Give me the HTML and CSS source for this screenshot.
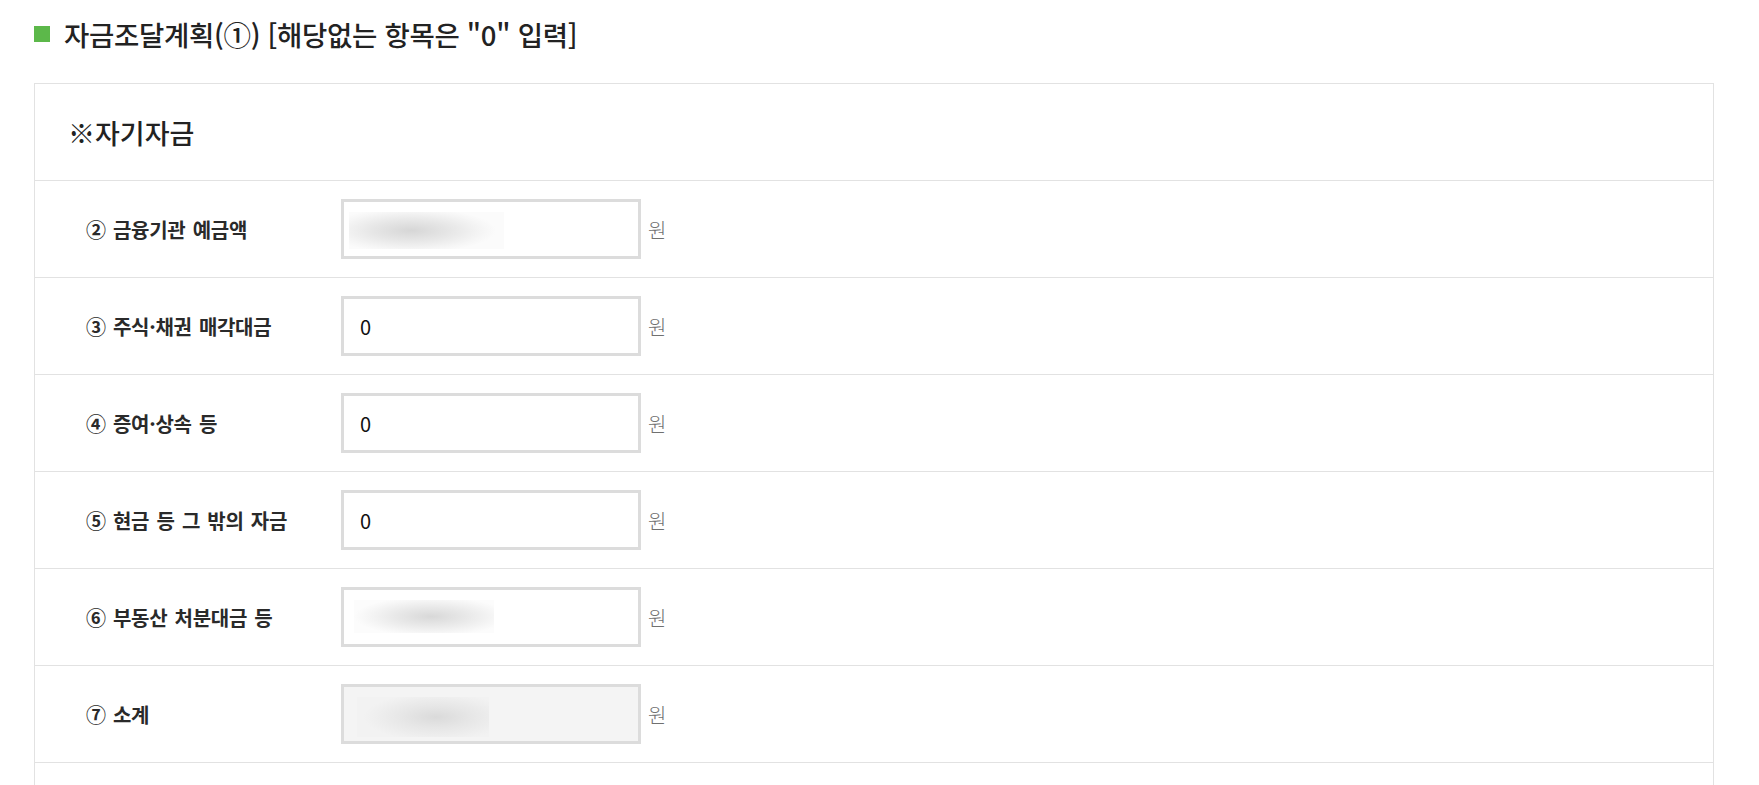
FILE: index.html
```html
<!DOCTYPE html>
<html lang="ko">
<head>
<meta charset="utf-8">
<title>자금조달계획</title>
<link rel="stylesheet" href="styles.css">
</head>
<body>
<div class="page">
  <h2 class="title"><span class="title-mark"></span>자금조달계획(①) [해당없는 항목은 "0" 입력]</h2>
  <div class="panel">
    <div class="panel-head">※자기자금</div>
    <div class="row">
      <div class="label">② 금융기관 예금액</div>
      <div class="field field--masked"><span class="mask mask--a"></span></div>
      <span class="unit">원</span>
    </div>
    <div class="row">
      <div class="label">③ 주식·채권 매각대금</div>
      <div class="field">0</div>
      <span class="unit">원</span>
    </div>
    <div class="row">
      <div class="label">④ 증여·상속 등</div>
      <div class="field">0</div>
      <span class="unit">원</span>
    </div>
    <div class="row">
      <div class="label">⑤ 현금 등 그 밖의 자금</div>
      <div class="field">0</div>
      <span class="unit">원</span>
    </div>
    <div class="row">
      <div class="label">⑥ 부동산 처분대금 등</div>
      <div class="field field--masked"><span class="mask mask--b"></span></div>
      <span class="unit">원</span>
    </div>
    <div class="row">
      <div class="label">⑦ 소계</div>
      <div class="field field--masked field--readonly"><span class="mask mask--c"></span></div>
      <span class="unit">원</span>
    </div>
    <div class="row row--next"></div>
  </div>
</div>
</body>
</html>
```

FILE: styles.css
```css
* {
  box-sizing: border-box;
}

html, body {
  margin: 0;
  padding: 0;
  background: #ffffff;
}

body {
  font-family: "Noto Sans CJK KR", "Noto Sans", sans-serif;
  color: #222222;
}

.page {
  padding: 0 45px 0 34px;
}

.title {
  display: flex;
  align-items: center;
  height: 68px;
  margin: 0 0 15px 0;
  font-size: 27.5px;
  font-weight: 500;
  color: #222222;
  letter-spacing: -0.3px;
}

.title-mark {
  width: 16px;
  height: 16px;
  margin: 0 14px 0 0;
  background: #5cb84a;
  flex: none;
}

.panel {
  width: 1680px;
  border: 1px solid #e2e2e2;
  border-bottom: none;
}

.panel-head {
  display: flex;
  align-items: center;
  height: 97px;
  padding-left: 33px;
  border-bottom: 1px solid #e2e2e2;
  font-size: 27px;
  font-weight: 500;
  color: #222222;
}

.row {
  display: flex;
  align-items: center;
  height: 97px;
  border-bottom: 1px solid #e2e2e2;
}

.row--next {
  height: 60px;
  border-bottom: none;
}

.label {
  width: 306px;
  padding-left: 51px;
  font-size: 20px;
  font-weight: 700;
  color: #2a2a2a;
  letter-spacing: -0.3px;
  word-spacing: 2px;
}

.field {
  display: flex;
  align-items: center;
  width: 300px;
  height: 60px;
  padding-left: 16px;
  border: 3px solid #dcdcdc;
  background: #ffffff;
  font-size: 20px;
  color: #111111;
}

.field--masked {
  align-items: flex-start;
  padding-left: 0;
}

.field--readonly {
  background: #f4f4f4;
}

.mask {
  display: block;
  margin-top: 10px;
}

.mask--a {
  margin-left: 5px;
  width: 155px;
  height: 37px;
  background: radial-gradient(ellipse 55% 60% at 40% 50%, #d6d6d6 0%, #e6e6e6 45%, #f6f6f6 85%, #fbfbfb 100%);
}

.mask--b {
  margin-left: 10px;
  width: 140px;
  height: 33px;
  background: radial-gradient(ellipse 55% 60% at 55% 50%, #d8d8d8 0%, #e8e8e8 45%, #f7f7f7 85%, #fcfcfc 100%);
}

.mask--c {
  margin-left: 13px;
  width: 132px;
  height: 40px;
  background: radial-gradient(ellipse 55% 60% at 60% 50%, #dadada 0%, #e6e6e6 45%, #efefef 85%, #f2f2f2 100%);
}

.unit {
  margin-left: 7px;
  font-size: 20px;
  font-weight: 300;
  color: #707070;
}
```
